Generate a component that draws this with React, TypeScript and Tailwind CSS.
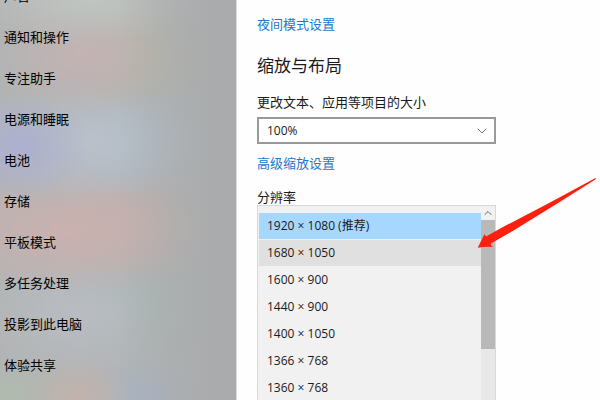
import React from "react";
import { ChevronDown, ChevronUp } from "lucide-react";

const navItems = ["声音", "通知和操作", "专注助手", "电源和睡眠", "电池", "存储", "平板模式", "多任务处理", "投影到此电脑", "体验共享"]

const resolutions = [
    "1920 × 1080 (推荐)",
    "1680 × 1050",
    "1600 × 900",
    "1440 × 900",
    "1400 × 1050",
    "1366 × 768",
    "1360 × 768",
]

function Sidebar() {
    return (
        <nav className="w-[236px] shrink-0 overflow-hidden bg-[#b2b4b4] bg-[linear-gradient(to_right,transparent_50%,#a9abac_92%),radial-gradient(ellipse_120px_45px_at_90px_0px,#c0c5c2,transparent),radial-gradient(ellipse_90px_60px_at_82px_54px,#c4b3b3,transparent),radial-gradient(ellipse_70px_60px_at_146px_56px,#b8b6a8,transparent),radial-gradient(ellipse_70px_55px_at_20px_146px,#acafd0,transparent),radial-gradient(ellipse_110px_60px_at_85px_142px,#bac1ca,transparent),radial-gradient(ellipse_100px_60px_at_145px_140px,#adbac6,transparent),radial-gradient(ellipse_150px_65px_at_65px_230px,#cab1af,transparent),radial-gradient(ellipse_100px_60px_at_140px_222px,#c0b1ad,transparent),radial-gradient(ellipse_100px_65px_at_80px_315px,#b9bdc3,transparent),radial-gradient(ellipse_90px_75px_at_145px_305px,#a8b5b2,transparent),radial-gradient(ellipse_55px_45px_at_78px_400px,#c2b3ac,transparent),radial-gradient(ellipse_70px_45px_at_5px_400px,#b0bbae,transparent),radial-gradient(ellipse_65px_40px_at_148px_396px,#a8b3c4,transparent)]">
            <ul className="-mt-6">
                {navItems.map((item) => (
                    <li key={item}>
                        <a className="flex h-[41px] items-center px-1 text-black" href="#">{item}</a>
                    </li>
                ))}
            </ul>
        </nav>
    )
}

function ScaleSelect() {
    return (
        <>
            <label className="mt-[14px] block leading-5" htmlFor="scale">更改文本、应用等项目的大小</label>
            <div className="relative mt-[5px]">
                <select className="block h-[27px] w-full appearance-none border-2 border-[#999999] bg-white px-2 text-xs outline-none" id="scale" defaultValue="100%">
                    <option>100%</option>
                    <option>125%</option>
                    <option>150%</option>
                </select>
                <ChevronDown className="pointer-events-none absolute right-1.5 top-1.5 size-4 text-[#777777]" strokeWidth={1.5} />
            </div>
        </>
    )
}

function Arrow() {
    return (
        <svg className="pointer-events-none absolute -top-7 left-[220px]" width="120" height="72" viewBox="0 0 120 72" aria-hidden="true">
            <path fill="#ff1f0f" d="M0.700 70.700L7.500 57Q8.500 59.500 9.500 59.300L25 50.500L73 25.500L118 1.200Q119.500 1 118.700 2.300L79.500 27L36.500 53.500L14 66.500Q13.500 68.500 16 70Q8 69.500 0.700 70.700Z" />
        </svg>
    )
}

function ResolutionList() {
    const [selected, setSelected] = React.useState(resolutions[0])

    return (
        <div className="relative flex min-h-0 flex-1 flex-col">
            <div className="flex min-h-0 flex-1 overflow-hidden border border-b-0 border-[#d9d9d9] bg-[#f1f1f1]">
                <div className="flex flex-1 flex-col gap-px pl-px pt-[7px]" role="listbox" aria-labelledby="resolution">
                    {resolutions.map((item) => (
                        <button
                            className="h-[26px] shrink-0 px-2 text-left text-xs hover:bg-[#e0e0e0] aria-selected:bg-[#a6d8ff] nth-2:bg-[#e0e0e0]"
                            key={item}
                            type="button"
                            role="option"
                            aria-selected={item === selected}
                            onClick={() => setSelected(item)}
                        >
                            {item}
                        </button>
                    ))}
                </div>
                <div className="flex w-3.5 flex-col bg-[#e8e8e8]">
                    <button className="flex h-3.5 items-center justify-center bg-[#f1f1f1]" type="button" aria-label="向上滚动">
                        <ChevronUp className="size-3 text-[#666666]" strokeWidth={2} />
                    </button>
                    <div className="h-[129px] bg-[#b9b9b9]" />
                </div>
            </div>
            <Arrow />
        </div>
    )
}

export default function App() {
    return (
        <div className="flex h-screen overflow-hidden bg-[#fefefe] font-['Open_Sans','Noto_Sans_CJK_SC',sans-serif] text-[13px] text-[#1a1a1a]">
            <Sidebar />
            <main className="flex min-w-0 flex-1 flex-col border-l border-[#dddddd] pl-5 pr-[104px] pt-[14px]">
                <a className="leading-5 text-[#1979ca]" href="#">夜间模式设置</a>
                <h2 className="mt-5 text-[17px] leading-6">缩放与布局</h2>
                <ScaleSelect />
                <a className="mt-[9px] leading-5 text-[#1979ca]" href="#">高级缩放设置</a>
                <p className="mt-[14px] h-[18px] leading-5" id="resolution">分辨率</p>
                <ResolutionList />
            </main>
        </div>
    )
}
